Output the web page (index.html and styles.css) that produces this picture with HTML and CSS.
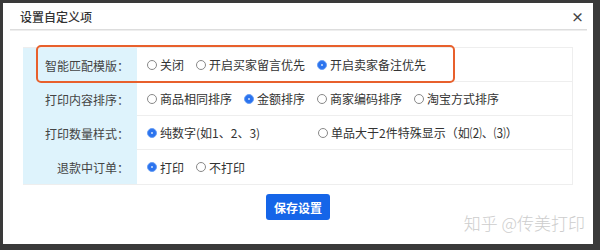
FILE: index.html
```html
<!DOCTYPE html>
<html lang="zh-CN">
<head>
<meta charset="utf-8">
<title>设置自定义项</title>
<link rel="stylesheet" href="styles.css">
</head>
<body>
<div class="dialog">
  <div class="header">
    <span class="title">设置自定义项</span>
    <span class="close">×</span>
  </div>
  <div class="divider"></div>
  <div class="form">
    <div class="highlight"></div>
    <div class="label">智能匹配模版：</div>
    <div class="cell">
      <label class="opt"><span class="radio"></span>关闭</label>
      <label class="opt"><span class="radio"></span>开启买家留言优先</label>
      <label class="opt"><span class="radio on"></span>开启卖家备注优先</label>
    </div>
    <div class="label">打印内容排序：</div>
    <div class="cell">
      <label class="opt"><span class="radio"></span>商品相同排序</label>
      <label class="opt"><span class="radio on"></span>金额排序</label>
      <label class="opt"><span class="radio"></span>商家编码排序</label>
      <label class="opt"><span class="radio"></span>淘宝方式排序</label>
    </div>
    <div class="label">打印数量样式：</div>
    <div class="cell">
      <label class="opt wide"><span class="radio on"></span>纯数字(如1、2、3)</label>
      <label class="opt"><span class="radio"></span>单品大于2件特殊显示（如⑵、⑶）</label>
    </div>
    <div class="label">退款中订单：</div>
    <div class="cell last">
      <label class="opt"><span class="radio on"></span>打印</label>
      <label class="opt"><span class="radio"></span>不打印</label>
    </div>
  </div>
  <div class="actions">
    <button class="btn">保存设置</button>
  </div>
  <div class="watermark">知乎 @传美打印</div>
</div>
</body>
</html>
```
FILE: styles.css
```css
html, body {
  margin: 0;
  padding: 0;
}
body {
  background: #3a3a3a;
  width: 600px;
  height: 250px;
  padding: 3px;
  box-sizing: border-box;
  font-family: "Noto Sans CJK SC", "Liberation Sans", sans-serif;
  font-size: 12px;
  color: #333;
}
.dialog {
  position: relative;
  width: 590px;
  height: 241px;
  background: #fff;
  box-sizing: border-box;
}
.header {
  height: 26px;
  display: flex;
  align-items: center;
  justify-content: space-between;
  padding: 0 9px 0 17px;
}
.title {
  font-size: 12px;
  color: #333;
  font-weight: 500;
}
.close {
  font-size: 13px;
  font-weight: bold;
  color: #444;
  line-height: 1;
}
.divider {
  height: 1px;
  background: #ddd;
  margin: 0 6px 0 7px;
  border-bottom: 1px solid #eee;
}
.form {
  position: relative;
  margin: 16px 20px 0 20px;
  display: grid;
  grid-template-columns: 114px 1fr;
  grid-auto-rows: 34px;
  border: 1px solid #eee;
  border-left: none;
}
.label {
  background: #def3fc;
  display: flex;
  align-items: center;
  justify-content: flex-end;
  padding-right: 8px;
  color: #444;
}
.cell {
  display: flex;
  align-items: center;
  gap: 12px;
  padding-left: 10px;
  border-bottom: 1px solid #eee;
}
.cell.last {
  border-bottom: none;
}
.opt {
  display: flex;
  align-items: center;
  gap: 3px;
  white-space: nowrap;
  color: #333;
}
.opt.wide {
  width: 159px;
}
.radio {
  width: 8px;
  height: 8px;
  border: 1px solid #888;
  border-radius: 50%;
  box-sizing: content-box;
  display: inline-block;
  position: relative;
}
.radio.on {
  background: #2b73ee;
  border-color: #6aa0f5;
}
.radio.on::after {
  content: "";
  position: absolute;
  left: 3px;
  top: 3px;
  width: 2px;
  height: 2px;
  border-radius: 50%;
  background: #cfe0fd;
}
.highlight {
  position: absolute;
  left: 13px;
  top: -3px;
  width: 415px;
  height: 34px;
  border: 2px solid #e8602c;
  border-radius: 5px;
  pointer-events: none;
}
.actions {
  display: flex;
  justify-content: center;
  margin-top: 9px;
}
.btn {
  width: 64px;
  height: 26px;
  background: #1565e8;
  color: #fff;
  border: none;
  border-radius: 3px;
  font-family: "Noto Sans CJK SC", sans-serif;
  font-size: 12px;
  font-weight: bold;
  padding: 0;
}
.watermark {
  position: absolute;
  right: 8px;
  bottom: 9px;
  font-family: "Noto Sans CJK SC", sans-serif;
  font-size: 17px;
  color: #cdcdcd;
  font-weight: 300;
}
```
